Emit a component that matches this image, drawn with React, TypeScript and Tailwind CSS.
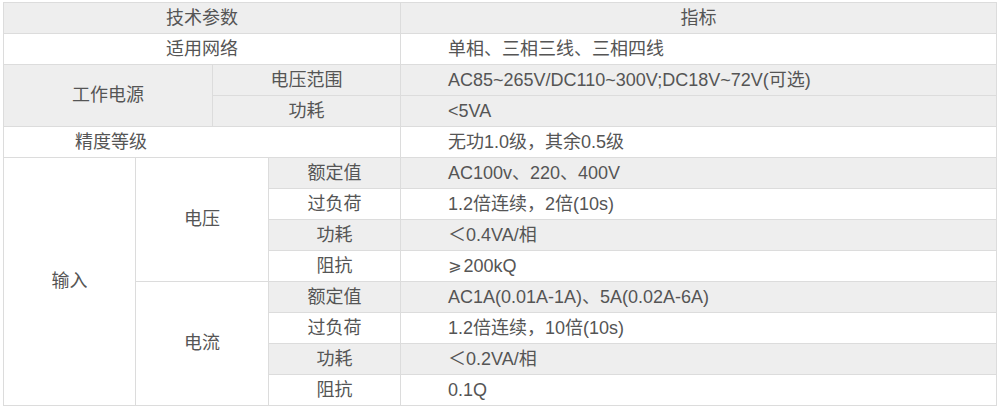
import React from 'react';

const font = { fontFamily: '"Liberation Sans", "Noto Sans CJK SC", sans-serif' };

type CellProps = {
  children?: React.ReactNode;
  className?: string;
  gray?: boolean;
  left?: boolean;
};

function Cell({ children, className = '', gray, left }: CellProps) {
  return (
    <div
      className={`flex items-center ${left ? 'justify-start pl-[47px]' : 'justify-center'} ${
        gray ? 'bg-[#eeeeee]' : 'bg-white'
      } ${className}`}
    >
      {children}
    </div>
  );
}

const ge = <span style={{ fontFamily: '"DejaVu Sans", "Noto Sans CJK SC", sans-serif' }} className="mr-[2px] text-[16px]">⩾</span>;

const inputRows: React.ReactNode[][] = [
  ['额定值', 'AC100v、220、400V', '过负荷', '1.2倍连续，2倍(10s)', '功耗', '＜0.4VA/相', '阻抗', <>{ge}200kQ</>],
  ['额定值', 'AC1A(0.01A-1A)、5A(0.02A-6A)', '过负荷', '1.2倍连续，10倍(10s)', '功耗', '＜0.2VA/相', '阻抗', '0.1Q'],
];

export default function App() {
  return (
    <div className="w-[1003px] h-[410px] bg-white pt-[2px] pl-[3px]">
      <div
        style={font}
        className="grid w-[994px] grid-cols-[131px_76px_55px_131px_595px] grid-rows-[repeat(13,30px)] gap-px bg-[#dcdcdc] p-px text-[18px] text-[#555]"
      >
        <Cell gray className="col-span-4">技术参数</Cell>
        <Cell gray>指标</Cell>

        <Cell className="col-span-4">适用网络</Cell>
        <Cell left>单相、三相三线、三相四线</Cell>

        <Cell gray className="col-span-2 row-span-2">工作电源</Cell>
        <Cell gray className="col-span-2">电压范围</Cell>
        <Cell gray left>AC85~265V/DC110~300V;DC18V~72V(可选)</Cell>
        <Cell gray className="col-span-2">功耗</Cell>
        <Cell gray left>&lt;5VA</Cell>

        <Cell className="col-span-4 !justify-start">
          <span className="w-[214px] text-center">精度等级</span>
        </Cell>
        <Cell left>无功1.0级，其余0.5级</Cell>

        <Cell className="row-span-8">输入</Cell>
        <Cell className="col-span-2 row-span-4">电压</Cell>
        <Cell gray>{inputRows[0][0]}</Cell>
        <Cell gray left>{inputRows[0][1]}</Cell>
        <Cell>{inputRows[0][2]}</Cell>
        <Cell left>{inputRows[0][3]}</Cell>
        <Cell gray>{inputRows[0][4]}</Cell>
        <Cell gray left>{inputRows[0][5]}</Cell>
        <Cell>{inputRows[0][6]}</Cell>
        <Cell left>{inputRows[0][7]}</Cell>

        <Cell className="col-span-2 row-span-4">电流</Cell>
        <Cell gray>{inputRows[1][0]}</Cell>
        <Cell gray left>{inputRows[1][1]}</Cell>
        <Cell>{inputRows[1][2]}</Cell>
        <Cell left>{inputRows[1][3]}</Cell>
        <Cell gray>{inputRows[1][4]}</Cell>
        <Cell gray left>{inputRows[1][5]}</Cell>
        <Cell>{inputRows[1][6]}</Cell>
        <Cell left>{inputRows[1][7]}</Cell>
      </div>
    </div>
  );
}
